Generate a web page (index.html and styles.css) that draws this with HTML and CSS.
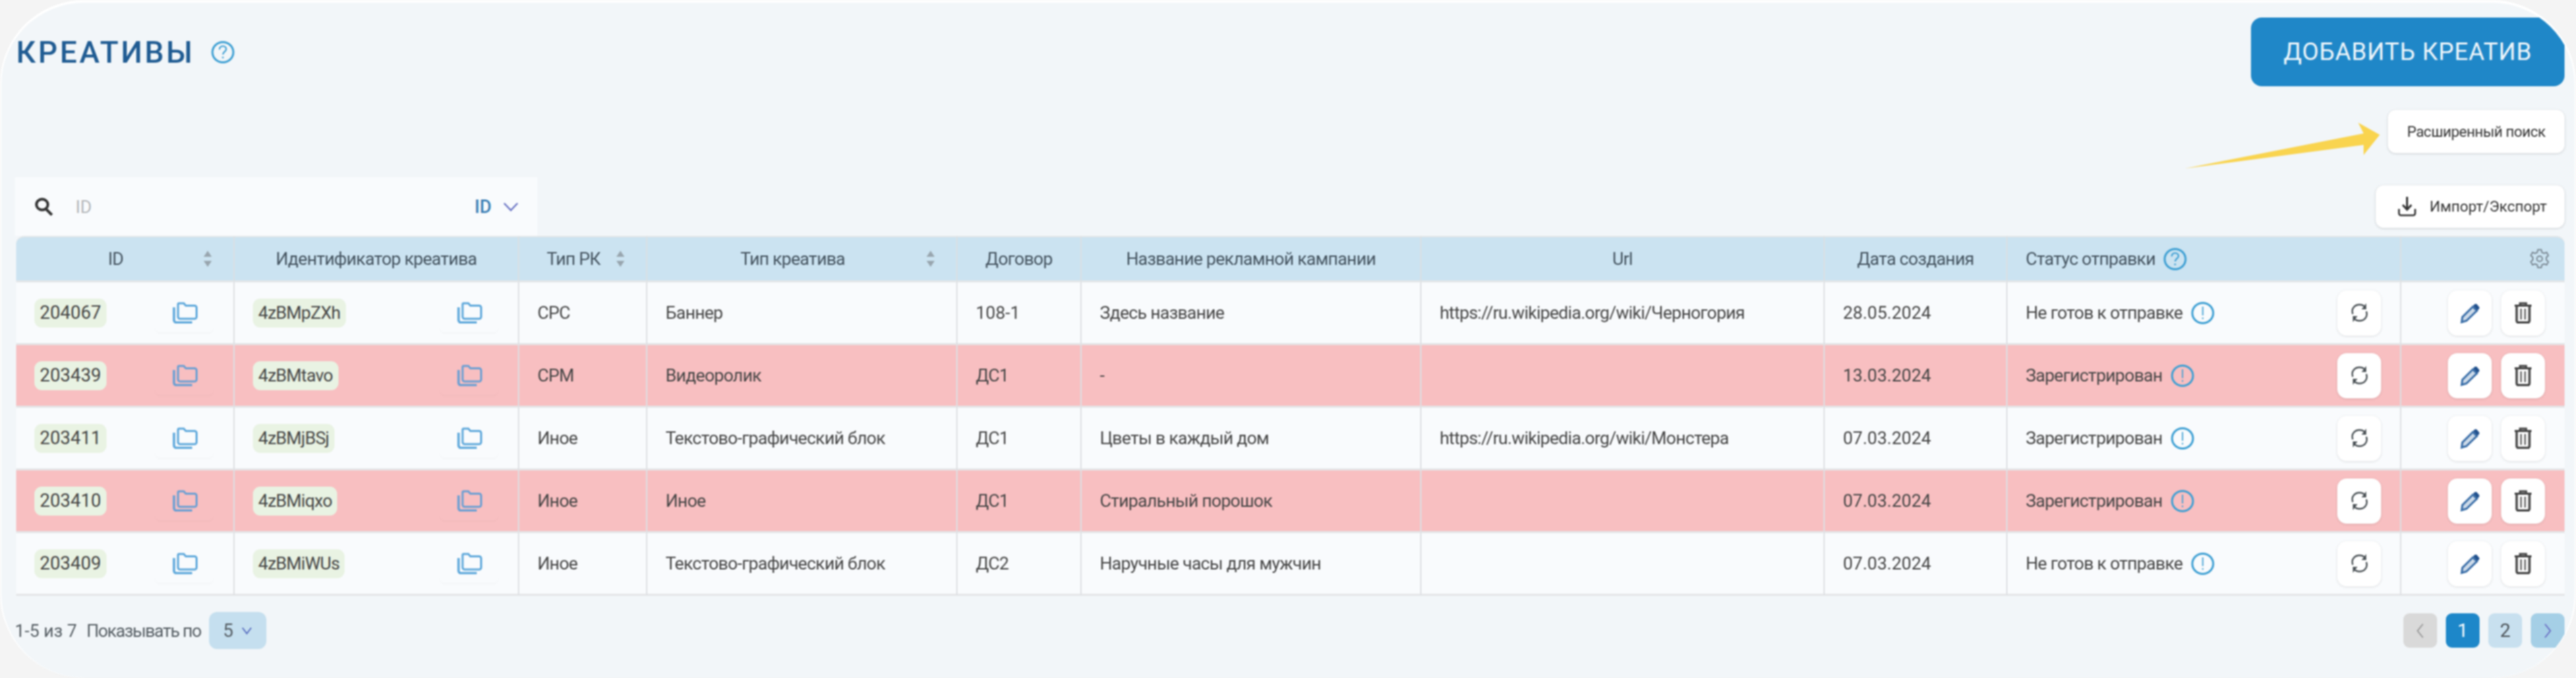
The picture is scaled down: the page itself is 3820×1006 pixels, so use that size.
FILE: index.html
```html
<!DOCTYPE html>
<html lang="ru">
<head>
<meta charset="utf-8">
<title>Креативы</title>
<link rel="stylesheet" href="styles.css">
</head>
<body>
<svg class="defs" width="0" height="0" aria-hidden="true">
  <symbol id="i-copy" viewBox="0 0 38 33">
    <path d="M9 4.5a1.5 1.5 0 0 1 1.5-1.5h7l3 3.500h13a3 3 0 0 1 3 3v13.500a3 3 0 0 1-3 3H12a3 3 0 0 1-3-3z" fill="none" stroke="currentColor" stroke-width="3"/>
    <path d="M3 9v19a3.500 3.500 0 0 0 3.500 3.500H30" fill="none" stroke="currentColor" stroke-width="3.500"/>
  </symbol>
  <symbol id="i-info" viewBox="0 0 35 33">
    <ellipse cx="17.500" cy="16.500" rx="15.500" ry="15" fill="none" stroke="currentColor" stroke-width="3"/>
    <path d="M17.500 7v13M17.500 23v2.500" fill="none" stroke="currentColor" stroke-width="1.800"/>
  </symbol>
  <symbol id="i-help" viewBox="0 0 35 33">
    <ellipse cx="17.500" cy="16.500" rx="15.500" ry="15" fill="none" stroke="currentColor" stroke-width="3"/>
    <path d="M12.500 12.500c0-3.500 2.500-5 5-5s5 1.700 5 4.500c0 3.500-5 4-5 8M17.500 23v2.500" fill="none" stroke="currentColor" stroke-width="2.200"/>
  </symbol>
  <symbol id="i-refresh" viewBox="0 0 28 30">
    <path d="M4 17C1 9 7 3 14 3c3 0 6 1 8 3.500" fill="none" stroke="currentColor" stroke-width="2.400"/>
    <path d="M24 13c3 8-3 14-10 14-3 0-6-1-8-3.500" fill="none" stroke="currentColor" stroke-width="2.400"/>
    <path d="M24 1v9h-7zM4 29v-9h7z" fill="currentColor"/>
  </symbol>
  <symbol id="i-pencil" viewBox="0 0 30 31">
    <path d="M2.500 29l1-7.500L19 6l6 6L9.500 27z" fill="currentColor" fill-opacity="0.25" stroke="currentColor" stroke-width="3"/>
    <path d="M21.500 2.500c1-1 2.500-1 3.500 0l3 3.500c1 1 1 2.500 0 3.500L26 11.500l-6.500-7z" fill="#1f4f8c"/>
  </symbol>
  <symbol id="i-trash" viewBox="0 0 27 32">
    <path d="M1 5.500h25M9 5V2h9v3" fill="none" stroke="currentColor" stroke-width="3"/>
    <path d="M4 6v22a2.500 2.500 0 0 0 2.500 2.500h14A2.500 2.500 0 0 0 23 28V6" fill="none" stroke="currentColor" stroke-width="3.400"/>
    <path d="M10.500 10v16M16.500 10v16" fill="none" stroke="currentColor" stroke-width="2"/>
  </symbol>
  <symbol id="i-sort" viewBox="0 0 14 24">
    <path d="M7 0l6 9H1zM7 24l-6-9h12z" fill="currentColor"/>
  </symbol>
</svg>

<main class="panel">
  <header class="top-row">
    <div class="title-wrap">
      <h1 class="title">КРЕАТИВЫ</h1>
      <svg class="help-title"><use href="#i-help"/></svg>
    </div>
    <button class="btn-add">ДОБАВИТЬ КРЕАТИВ</button>
  </header>

  <div class="adv-row">
    <button class="btn-light btn-adv">Расширенный поиск</button>
    <svg class="arrow" viewBox="0 0 300 70" aria-hidden="true">
      <polygon points="0,69 265,17 257,1 289,19 265,49 265,34" fill="#f9d44f"/>
    </svg>
  </div>

  <div class="tools-row">
    <div class="search">
      <svg class="search-icon" viewBox="0 0 29 27"><ellipse cx="11.500" cy="10.500" rx="8.500" ry="8" fill="none" stroke="#333" stroke-width="4"/><path d="M17 17l9 9" stroke="#333" stroke-width="4" fill="none"/></svg>
      <span class="search-ph">ID</span>
      <span class="search-type">ID</span>
      <svg class="chev-search" viewBox="0 0 23 14"><path d="M1.500 1.500L11.500 12l10-10.500" fill="none" stroke="currentColor" stroke-width="2.400"/></svg>
    </div>
    <button class="btn-light btn-import">
      <svg class="dl-icon" viewBox="0 0 27 29"><path d="M13.500 0v18M7 12l6.500 7 6.500-7" fill="none" stroke="#333" stroke-width="3"/><path d="M1.500 18v6.500a3 3 0 0 0 3 3h18a3 3 0 0 0 3-3V18" fill="none" stroke="#333" stroke-width="2.600"/></svg>
      <span>Импорт/Экспорт</span>
    </button>
  </div>

  <table class="grid">
    <colgroup>
      <col class="c1"><col class="c2"><col class="c3"><col class="c4"><col class="c5">
      <col class="c6"><col class="c7"><col class="c8"><col class="c9"><col class="c10">
    </colgroup>
    <thead>
      <tr>
        <th><div class="th-sort"><span>ID</span><svg class="sort"><use href="#i-sort"/></svg></div></th>
        <th>Идентификатор креатива</th>
        <th><div class="th-sort"><span>Тип РК</span><svg class="sort"><use href="#i-sort"/></svg></div></th>
        <th><div class="th-sort"><span>Тип креатива</span><svg class="sort"><use href="#i-sort"/></svg></div></th>
        <th>Договор</th>
        <th>Название рекламной кампании</th>
        <th>Url</th>
        <th>Дата создания</th>
        <th class="th-left"><span class="th-status">Статус отправки <svg class="info"><use href="#i-help"/></svg></span></th>
        <th class="th-gear"><svg class="gear" viewBox="0 0 30 31"><path d="M12.500 1.500h5l1 4 3 1.500 4-1.500 2.500 4.500-3 3v3.500l3 3-2.500 4.500-4-1.500-3 1.500-1 4h-5l-1-4-3-1.500-4 1.500L2 19.500l3-3V13l-3-3 2.500-4.500 4 1.500 3-1.500z" fill="none" stroke="currentColor" stroke-width="2"/><circle cx="15" cy="15" r="4" fill="none" stroke="currentColor" stroke-width="2"/></svg></th>
      </tr>
    </thead>
    <tbody>
      <tr>
        <td><div class="cell-copy"><span class="chip chip-num">204067</span><span class="copy-btn"><svg class="copy"><use href="#i-copy"/></svg></span></div></td>
        <td><div class="cell-copy"><span class="chip">4zBMpZXh</span><span class="copy-btn"><svg class="copy"><use href="#i-copy"/></svg></span></div></td>
        <td>CPC</td><td>Баннер</td><td class="num">108-1</td><td>Здесь название</td>
        <td>https://ru.wikipedia.org/wiki/Черногория</td><td class="num">28.05.2024</td>
        <td><div class="cell-status"><span class="status">Не готов к отправке <svg class="info"><use href="#i-info"/></svg></span><button class="icon-btn"><svg class="ic-refresh"><use href="#i-refresh"/></svg></button></div></td>
        <td><div class="cell-actions"><button class="icon-btn"><svg class="ic-pencil"><use href="#i-pencil"/></svg></button><button class="icon-btn"><svg class="ic-trash"><use href="#i-trash"/></svg></button></div></td>
      </tr>
      <tr class="row-error">
        <td><div class="cell-copy"><span class="chip chip-num">203439</span><span class="copy-btn"><svg class="copy"><use href="#i-copy"/></svg></span></div></td>
        <td><div class="cell-copy"><span class="chip">4zBMtavo</span><span class="copy-btn"><svg class="copy"><use href="#i-copy"/></svg></span></div></td>
        <td>CPM</td><td>Видеоролик</td><td>ДС1</td><td>-</td>
        <td></td><td class="num">13.03.2024</td>
        <td><div class="cell-status"><span class="status">Зарегистрирован <svg class="info"><use href="#i-info"/></svg></span><button class="icon-btn"><svg class="ic-refresh"><use href="#i-refresh"/></svg></button></div></td>
        <td><div class="cell-actions"><button class="icon-btn"><svg class="ic-pencil"><use href="#i-pencil"/></svg></button><button class="icon-btn"><svg class="ic-trash"><use href="#i-trash"/></svg></button></div></td>
      </tr>
      <tr>
        <td><div class="cell-copy"><span class="chip chip-num">203411</span><span class="copy-btn"><svg class="copy"><use href="#i-copy"/></svg></span></div></td>
        <td><div class="cell-copy"><span class="chip">4zBMjBSj</span><span class="copy-btn"><svg class="copy"><use href="#i-copy"/></svg></span></div></td>
        <td>Иное</td><td>Текстово-графический блок</td><td>ДС1</td><td>Цветы в каждый дом</td>
        <td>https://ru.wikipedia.org/wiki/Монстера</td><td class="num">07.03.2024</td>
        <td><div class="cell-status"><span class="status">Зарегистрирован <svg class="info"><use href="#i-info"/></svg></span><button class="icon-btn"><svg class="ic-refresh"><use href="#i-refresh"/></svg></button></div></td>
        <td><div class="cell-actions"><button class="icon-btn"><svg class="ic-pencil"><use href="#i-pencil"/></svg></button><button class="icon-btn"><svg class="ic-trash"><use href="#i-trash"/></svg></button></div></td>
      </tr>
      <tr class="row-error">
        <td><div class="cell-copy"><span class="chip chip-num">203410</span><span class="copy-btn"><svg class="copy"><use href="#i-copy"/></svg></span></div></td>
        <td><div class="cell-copy"><span class="chip">4zBMiqxo</span><span class="copy-btn"><svg class="copy"><use href="#i-copy"/></svg></span></div></td>
        <td>Иное</td><td>Иное</td><td>ДС1</td><td>Стиральный порошок</td>
        <td></td><td class="num">07.03.2024</td>
        <td><div class="cell-status"><span class="status">Зарегистрирован <svg class="info"><use href="#i-info"/></svg></span><button class="icon-btn"><svg class="ic-refresh"><use href="#i-refresh"/></svg></button></div></td>
        <td><div class="cell-actions"><button class="icon-btn"><svg class="ic-pencil"><use href="#i-pencil"/></svg></button><button class="icon-btn"><svg class="ic-trash"><use href="#i-trash"/></svg></button></div></td>
      </tr>
      <tr>
        <td><div class="cell-copy"><span class="chip chip-num">203409</span><span class="copy-btn"><svg class="copy"><use href="#i-copy"/></svg></span></div></td>
        <td><div class="cell-copy"><span class="chip">4zBMiWUs</span><span class="copy-btn"><svg class="copy"><use href="#i-copy"/></svg></span></div></td>
        <td>Иное</td><td>Текстово-графический блок</td><td>ДС2</td><td>Наручные часы для мужчин</td>
        <td></td><td class="num">07.03.2024</td>
        <td><div class="cell-status"><span class="status">Не готов к отправке <svg class="info"><use href="#i-info"/></svg></span><button class="icon-btn"><svg class="ic-refresh"><use href="#i-refresh"/></svg></button></div></td>
        <td><div class="cell-actions"><button class="icon-btn"><svg class="ic-pencil"><use href="#i-pencil"/></svg></button><button class="icon-btn"><svg class="ic-trash"><use href="#i-trash"/></svg></button></div></td>
      </tr>
    </tbody>
  </table>

  <footer class="foot">
    <div class="foot-left">
      <span class="range">1-5 из 7</span>
      <span class="per-label">Показывать по</span>
      <span class="per-select">5<svg class="chev-small" viewBox="0 0 16 12"><path d="M1.500 1.500L8 10l6.500-8.500" fill="none" stroke="currentColor" stroke-width="2"/></svg></span>
    </div>
    <nav class="pager">
      <span class="page page-off"><svg class="pg-chev" viewBox="0 0 12 24"><path d="M10 2L2 12l8 10" fill="none" stroke="currentColor" stroke-width="2"/></svg></span>
      <span class="page page-on">1</span>
      <span class="page">2</span>
      <span class="page page-next"><svg class="pg-chev" viewBox="0 0 12 24"><path d="M2 2l8 10-8 10" fill="none" stroke="currentColor" stroke-width="2"/></svg></span>
    </nav>
  </footer>
</main>
</body>
</html>
```
FILE: styles.css
```css
* { box-sizing: border-box; }
html, body { margin: 0; padding: 0; height: 100%; overflow: hidden; }
body { background: #f4f4f4; font-family: Roboto, "Liberation Sans", sans-serif; color: #454545; }
.defs { position: absolute; }
button { font-family: inherit; cursor: pointer; }

.panel {
  position: relative;
  width: 3820px;
  height: 1006px;
  padding: 22px 15px 0 20px;
  background: #f2f6f9;
  border: solid #fff;
  border-width: 4px 2px 0;
  border-radius: 125px;
  overflow: hidden;
  filter: blur(1px);
}

.top-row { display: flex; justify-content: space-between; align-items: center; height: 102px; padding-left: 2px; }
.title-wrap { display: flex; align-items: center; gap: 24px; }
.title { margin: 0; font-size: 45px; font-weight: 500; letter-spacing: 3.500px; color: #1f5b92; line-height: 1; }
.help-title { width: 35px; height: 35px; color: #3d9fd3; }
.btn-add {
  width: 465px; height: 102px; border: 0; border-radius: 16px;
  background: #1f87c8; color: #eef6fb; font-size: 36px; font-weight: 400; letter-spacing: 0.800px;
}

.adv-row { position: relative; display: flex; justify-content: flex-end; margin-top: 35px; }
.btn-light {
  background: #fff; border: 0; border-radius: 12px; color: #333;
  box-shadow: 0 1px 3px 1px rgba(0, 0, 0, 0.1);
  font-size: 22px;
}
.btn-adv { width: 262px; height: 64px; padding: 0; letter-spacing: -0.500px; }
.arrow { position: absolute; right: 263px; top: 18px; width: 300px; height: 70px; overflow: visible; }

.tools-row { display: flex; justify-content: space-between; margin-top: 36px; height: 87px; }
.search {
  display: flex; align-items: center; width: 775px; background: #f9fbfd; padding: 0 28px 0 29px;
}
.search-icon { width: 29px; height: 27px; }
.search-ph { margin-left: 32px; flex: 1; font-size: 26px; color: #b3b6b9; }
.search-type { font-size: 27px; font-weight: 500; color: #3c7fb5; }
.chev-search { width: 23px; height: 14px; margin-left: 17px; color: #6a74c4; }
.btn-import {
  align-self: flex-end; margin-bottom: 12px; width: 280px; height: 63px;
  display: flex; align-items: center; padding: 0 0 0 33px; gap: 20px;
}
.dl-icon { width: 27px; height: 29px; }

.grid {
  width: 3779px; margin-left: 2px; table-layout: fixed;
  border-collapse: separate; border-spacing: 0;
  font-size: 26px; letter-spacing: -0.700px;
}
.c1 { width: 324px; } .c2 { width: 422px; } .c3 { width: 190px; } .c4 { width: 460px; }
.c5 { width: 184px; } .c6 { width: 504px; } .c7 { width: 598px; } .c8 { width: 271px; }
.c9 { width: 584px; } .c10 { width: 242px; }

th {
  height: 69px; background: #cbe3f1; font-weight: 400; color: #43525e;
  border-right: 2px solid #dadfe3; border-top: 2px solid #e3e6e8; border-bottom: 3px solid #e3e6e8;
  padding: 0 27px; text-align: center;
}
th:first-child { border-top-left-radius: 12px; }
th:last-child { border-top-right-radius: 12px; border-right: 0; }
.th-left { text-align: left; }
.th-sort { display: flex; align-items: center; justify-content: center; position: relative; padding-right: 27px; }
.sort { position: absolute; right: 4px; top: 50%; margin-top: -12px; width: 14px; height: 24px; color: #98a5ae; }
.th-status { display: inline-flex; align-items: center; gap: 12px; }
.th-gear { text-align: right; padding-right: 22px; }
.gear { width: 30px; height: 31px; color: #7d8b96; vertical-align: middle; }

td {
  height: 93px; background: #f9fbfd; padding: 0 27px;
  border-right: 2px solid #dde0e3; border-bottom: 3px solid #e4e5e7;
  white-space: nowrap;
}
td:last-child { border-right: 0; }
.row-error td { background: #f8bfc1; }
td.num { letter-spacing: 0; }

.cell-copy { display: flex; align-items: center; justify-content: space-between; }
.chip { display: inline-block; height: 43px; line-height: 43px; padding: 0 8px; border-radius: 11px; background: #e9f3e3; }
.chip-num { font-size: 27px; letter-spacing: 0; }
.copy-btn {
  display: flex; justify-content: center; width: 87px; height: 52px; padding-top: 6px; margin: 6px 2px 0 0;
  border-radius: 8px; box-shadow: 0 2px 2px rgba(0, 0, 0, 0.025);
}
.copy { width: 38px; height: 33px; color: #5ea8db; }
.row-error .copy { color: #6a9fd3; }

.cell-status { display: flex; align-items: center; justify-content: space-between; padding-right: 1px; }
.status { display: inline-flex; align-items: center; gap: 12px; }
.info { width: 35px; height: 33px; color: #3d9fd3; }
.icon-btn {
  display: flex; align-items: center; justify-content: center;
  width: 65px; height: 67px; padding: 0; border: 0; border-radius: 14px; background: #fff;
  box-shadow: 0 1px 3px 1px rgba(0, 0, 0, 0.08);
}
.cell-actions { display: flex; justify-content: flex-end; gap: 14px; padding-right: 2px; }
.ic-refresh { width: 28px; height: 30px; color: #4c5357; }
.ic-pencil { width: 30px; height: 31px; color: #3a6ea8; }
.ic-trash { width: 27px; height: 32px; color: #444; }

.foot { display: flex; justify-content: space-between; align-items: flex-start; margin-top: 24px; }
.foot-left { display: flex; align-items: center; height: 55px; font-size: 26px; color: #555d63; }
.per-label { margin-left: 14px; letter-spacing: -1.300px; }
.per-select {
  display: flex; align-items: center; justify-content: center; gap: 12px;
  width: 85px; height: 55px; margin-left: 12px; border-radius: 12px; background: #c5dfef; font-size: 27px;
}
.chev-small { width: 16px; height: 12px; color: #5a6fc0; }
.pager { display: flex; gap: 13px; margin-top: 2px; }
.page {
  display: flex; align-items: center; justify-content: center;
  width: 50px; height: 51px; border-radius: 9px; background: #c8e0ef; font-size: 28px; color: #4b5257;
}
.page-off { background: #d9d9d9; color: #9a9a9a; }
.page-on { background: #1d87c9; color: #fff; }
.page-next { background: #a5cfe6; color: #6a6fc4; }
.pg-chev { width: 12px; height: 24px; }
```
